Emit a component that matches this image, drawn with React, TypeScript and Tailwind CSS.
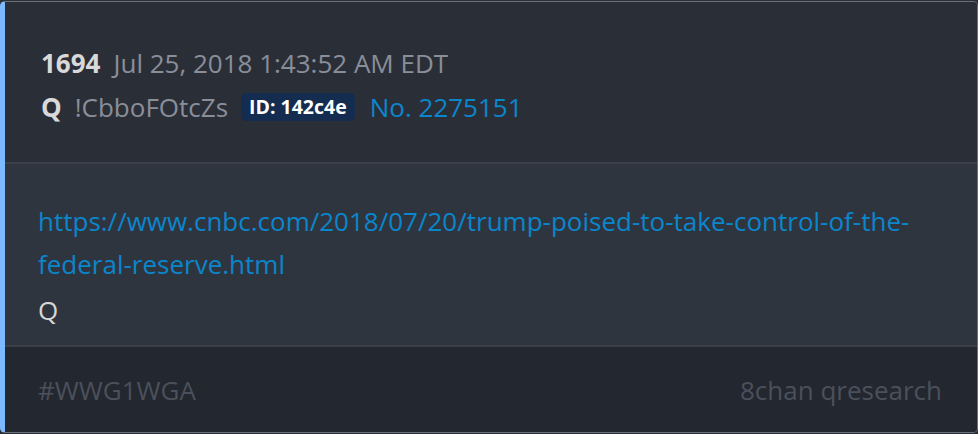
export default function App() {
  return (
    <div className="w-[978px] h-[434px] bg-[#2b2f38] pt-px" style={{ fontFamily: '"Open Sans", sans-serif' }}>
      <div className="h-[432px] flex flex-col overflow-hidden rounded-[5px] border border-[#6b6f7a] border-l-[5px] border-l-[#7db9ff]">
        {/* header */}
        <div className="h-[162px] shrink-0 bg-[#2a2e37] pl-[36px] pt-[39px] border-b-2 border-[#3b3f49]">
          <div className="flex items-baseline gap-[13px] text-[26px] leading-[44px]">
            <span className="font-bold text-[#d9d9d9]">1694</span>
            <span className="text-[#8a8e99]">Jul 25, 2018 1:43:52 AM EDT</span>
          </div>
          <div className="flex items-center text-[26px] leading-[44px]">
            <span className="font-bold text-[#d9d9d9]">Q</span>
            <span className="ml-[13px] text-[#8a8e99]">!CbboFOtcZs</span>
            <span className="ml-[13px] rounded-[5px] bg-[#142c4f] px-[8px] text-[19.5px] leading-[28px] font-bold text-white">
              ID: 142c4e
            </span>
            <span className="ml-[15px] text-[#0a86cc]">No. 2275151</span>
          </div>
        </div>
        {/* body */}
        <div className="h-[183px] shrink-0 bg-[#2f353f] pl-[33px] pt-[36px] border-b-2 border-[#3b3f49]">
          <a className="block w-[900px] text-[26px] leading-[43px] text-[#0a86cc]">
            https://www.cnbc.com/2018/07/20/trump-poised-to-take-control-of-the-federal-reserve.html
          </a>
          <p className="text-[26px] leading-[49px] text-[#d6d6d6]">Q</p>
        </div>
        {/* footer */}
        <div className="flex-1 bg-[#23272f] pl-[33px] pr-[35px] pt-[2px] flex items-center justify-between text-[26px] text-[#4b505b]">
          <span>#WWG1WGA</span>
          <span>8chan qresearch</span>
        </div>
      </div>
    </div>
  );
}
